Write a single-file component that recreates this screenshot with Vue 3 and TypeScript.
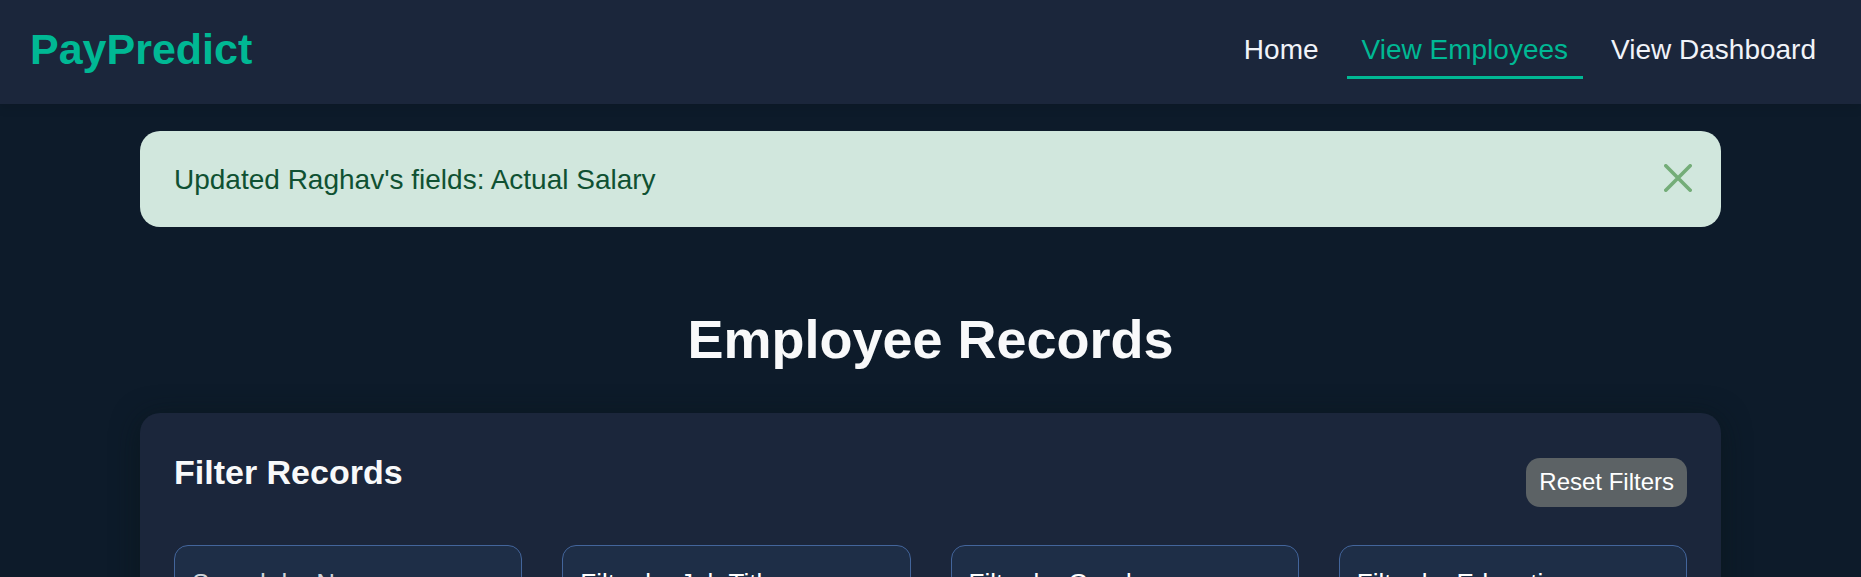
<script setup lang="ts">
import { computed, reactive, ref } from 'vue'

interface NavLink {
  label: string
  href: string
  active: boolean
}

interface SelectFilter {
  key: 'job' | 'gender' | 'education'
  label: string
}

const links: NavLink[] = [
  { label: 'Home', href: '#home', active: false },
  { label: 'View Employees', href: '#employees', active: true },
  { label: 'View Dashboard', href: '#dashboard', active: false },
]

const selects: SelectFilter[] = [
  { key: 'job', label: 'Filter by Job Title' },
  { key: 'gender', label: 'Filter by Gender' },
  { key: 'education', label: 'Filter by Education' },
]

const name = ref('')
const choices = reactive({ job: '', gender: '', education: '' })
const message = ref("Updated Raghav's fields: Actual Salary")
const hasMessage = computed(() => message.value !== '')

function resetFilters(): void {
  name.value = ''
  choices.job = ''
  choices.gender = ''
  choices.education = ''
}
</script>

<template>
  <div class="page">
    <header class="navbar">
      <a class="brand" href="#home">PayPredict</a>
      <nav class="links">
        <a
          v-for="link in links"
          :key="link.label"
          class="link"
          :class="{ active: link.active }"
          :href="link.href"
          >{{ link.label }}</a
        >
      </nav>
    </header>

    <main class="content">
      <div v-if="hasMessage" class="alert" role="alert">
        <span>{{ message }}</span>
        <button class="close" type="button" aria-label="Close" @click="message = ''">
          <svg viewBox="0 0 28 28" width="28" height="28" aria-hidden="true">
            <path d="M1.8 1.8 26.2 26.2M26.2 1.8 1.8 26.2" />
          </svg>
        </button>
      </div>

      <h1 class="title">Employee Records</h1>

      <section class="card">
        <div class="card-head">
          <h2 class="subtitle">Filter Records</h2>
          <button class="reset" type="button" @click="resetFilters">Reset Filters</button>
        </div>
        <form class="filters" @submit.prevent>
          <input
            v-model="name"
            class="field"
            type="text"
            placeholder="Search by Name"
            aria-label="Search by Name"
          />
          <select
            v-for="item in selects"
            :key="item.key"
            v-model="choices[item.key]"
            class="field"
            :aria-label="item.label"
          >
            <option value="">{{ item.label }}</option>
          </select>
        </form>
      </section>
    </main>
  </div>
</template>

<style>
body {
  margin: 0;
  background: #0d1b2a;
}
</style>

<style scoped>
.page {
  min-height: 100vh;
  background: #0d1b2a;
  color: #f8f9fa;
  font-family: 'Liberation Sans', Arial, sans-serif;
  font-size: 28px;
  line-height: 42px;
}

.navbar {
  position: relative;
  display: flex;
  align-items: center;
  justify-content: space-between;
  box-sizing: border-box;
  min-height: 104px;
  padding: 0 30px 6px;
  background: #1b263b;
  box-shadow: 0 4px 10px rgba(0, 0, 0, 0.1);
}

.brand {
  color: #00b894;
  font-size: 43px;
  font-weight: 700;
  text-decoration: none;
}

.links {
  display: flex;
  gap: 13px;
}

.link {
  padding: 10px 15px 5px;
  border-bottom: 3px solid transparent;
  color: #f1f3f9;
  text-decoration: none;
}

.link.active {
  border-bottom-color: #00b894;
  color: #00b894;
}

.content {
  max-width: 1581px;
  margin: 0 auto;
  padding: 27px 40px 40px;
}

.alert {
  display: flex;
  align-items: center;
  justify-content: space-between;
  padding: 28px 29px 26px 34px;
  border-radius: 20px;
  background: #d1e7dd;
  color: #0f5132;
}

.close {
  display: flex;
  margin-bottom: 4px;
  padding: 0;
  border: 0;
  background: none;
  cursor: pointer;
}

.close path {
  fill: none;
  stroke: #74ad78;
  stroke-width: 3.6;
  stroke-linecap: round;
}

.title {
  margin: 78px 0 40px;
  font-size: 54px;
  line-height: 68px;
  text-align: center;
}

.card {
  padding: 38px 34px 40px;
  border-radius: 20px;
  background: #1b263b;
  box-shadow: 0 4px 28px rgba(8, 22, 24, 0.6);
}

.card-head {
  display: flex;
  align-items: flex-start;
  justify-content: space-between;
  margin-bottom: 38px;
}

.subtitle {
  margin: 0;
  font-size: 34px;
  line-height: 42px;
}

.reset {
  margin-top: 7px;
  padding: 0 13px 2px;
  border: 0;
  border-radius: 14px;
  background: #5c6265;
  color: #ffffff;
  font: inherit;
  font-size: 24px;
  line-height: 47px;
  cursor: pointer;
}

.filters {
  display: grid;
  grid-template-columns: repeat(4, minmax(0, 1fr));
  gap: 40px;
}

.field {
  box-sizing: border-box;
  width: 100%;
  height: 76px;
  margin: 0;
  padding: 0 17px;
  border: 1px solid #43659b;
  border-radius: 14px;
  background: #1e2e47;
  color: #ffffff;
  font: inherit;
  font-size: 26px;
  appearance: none;
}

.field::placeholder {
  color: #ced4da;
  opacity: 1;
}
</style>
